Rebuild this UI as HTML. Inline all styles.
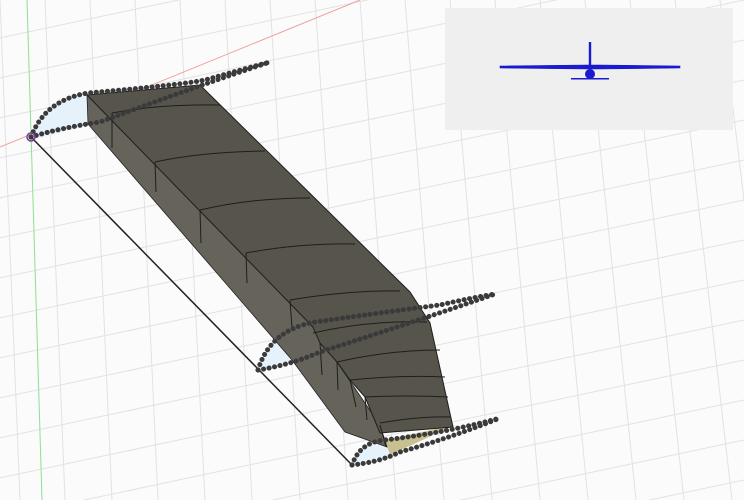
<!DOCTYPE html>
<html><head><meta charset="utf-8"><style>
html,body{margin:0;padding:0;background:#fff;width:744px;height:500px;overflow:hidden}
svg{display:block}
</style></head><body>
<svg width="744" height="500" viewBox="0 0 744 500" xmlns="http://www.w3.org/2000/svg">
<rect width="744" height="500" fill="#fbfbfb"/>
<g stroke="#e2e2e2" stroke-width="1" fill="none">
<path d="M-10 40 L744 -120 M-10 80 L744 -80 M-10 120 L744 -40 M-10 160 L744 0 M-10 200 L744 40 M-10 240 L744 80 M-10 280 L744 120 M-10 320 L744 160 M-10 360 L744 200 M-10 400 L744 240 M-10 440 L744 280 M-10 480 L744 320 M-10 520 L744 360 M-10 560 L744 400 M-10 600 L744 440 M-10 640 L744 480 M-10 680 L744 520 M-10 720 L744 560"/>
<path d="M0 0 L20 500 M45 0 L65 500 M90 0 L112 500 M135 0 L158 500 M180 0 L205 500 M225 0 L252 500 M270 0 L300 500 M315 0 L348 500 M360 0 L396 500 M405 0 L444 500 M450 0 L492 500 M495 0 L540 500 M540 0 L588 500 M585 0 L636 500 M630 0 L684 500 M675 0 L732 500 M720 0 L780 500"/>
</g>
<line x1="27" y1="0" x2="42" y2="500" stroke="#8fe08f" stroke-width="1"/>
<line x1="0" y1="147" x2="360" y2="0" stroke="#f0a0a0" stroke-width="1"/>
<!-- airfoil fills -->
<path d="M31 137 Q45 100 88 93 L88 125 L40 138 Z" fill="#e6f2fb"/>
<path d="M258 370 Q270 330 315 322 L318 352 L270 370 Z" fill="#e6f2fb"/>
<path d="M352 465 Q360 442 385 440 L390 455 Z" fill="#e6f2fb"/>
<path d="M385 440 L455 425 L390 455 Z" fill="#c8c090"/>
<line x1="31" y1="137" x2="352" y2="465" stroke="#222" stroke-width="1.5"/>
<!-- beam left face -->
<polygon points="87,95 313,327 380,425 387,447 345,432 292,360 88,124" fill="#66635b" stroke="#222" stroke-width="0.8"/>
<!-- beam top face -->
<polygon points="87,95 200,85 410,292 430,323 453,427 380,433 365,397 350,380 337,362 320,343 313,327" fill="#57544c" stroke="#1e1e1e" stroke-width="1"/>
<g stroke="#1e1e1e" stroke-width="1" fill="none">
<path d="M112,113 L112,148 M155,162 L156,192 M200,210 L201,243 M246,253 L247,283 M290,300 L292,328 M320,343 L322,375 M337,362 L338,390 M350,380 L356,407 M365,397 L367,420 M380,425 L386,447"/>
<path d="M112,113 Q160,104 220,105 M155,162 Q200,152 265,151 M200,210 Q250,198 310,198 M246,253 Q300,243 355,244 M290,300 Q350,290 400,291 M313,333 Q370,320 427,322 M337,362 Q390,350 440,350 M350,380 Q400,375 445,377 M365,397 Q410,395 448,397 M380,423 Q420,416 450,417"/>
</g>
<!-- dotted airfoils -->
<g fill="none" stroke="#3a3a3a" stroke-width="5" stroke-linecap="round" stroke-dasharray="0.1 5.5">
<path d="M31 137 Q45 100 88 93 Q180 85 205 80 Q240 70 270 62"/>
<path d="M31 137 Q60 128 100 122 Q200 85 270 62"/>
<path d="M258 370 Q270 330 315 322 Q400 310 440 305 Q470 298 495 294"/>
<path d="M258 370 Q290 365 320 352 Q420 320 495 294"/>
<path d="M352 465 Q360 442 385 440 Q450 432 500 418"/>
<path d="M352 465 Q380 462 400 452 Q450 438 500 418"/>
</g>
<circle cx="31" cy="137" r="4" fill="none" stroke="#7a3aa0" stroke-width="1.5"/>
<!-- inset -->
<rect x="445" y="8" width="288" height="122" fill="#efefef"/>
<g stroke="#1515cc" fill="#1a1ad0">
<path d="M500 66 L585 65 L600 65 L680 66 L680 68 L600 69 L585 69 L500 68 Z" stroke-width="0.6"/>
<rect x="588.8" y="42" width="2.4" height="26" stroke="none"/>
<circle cx="590" cy="74" r="5" stroke="none"/>
<rect x="571" y="78" width="38" height="1.5" stroke="none"/>
</g>
</svg>
</body></html>
